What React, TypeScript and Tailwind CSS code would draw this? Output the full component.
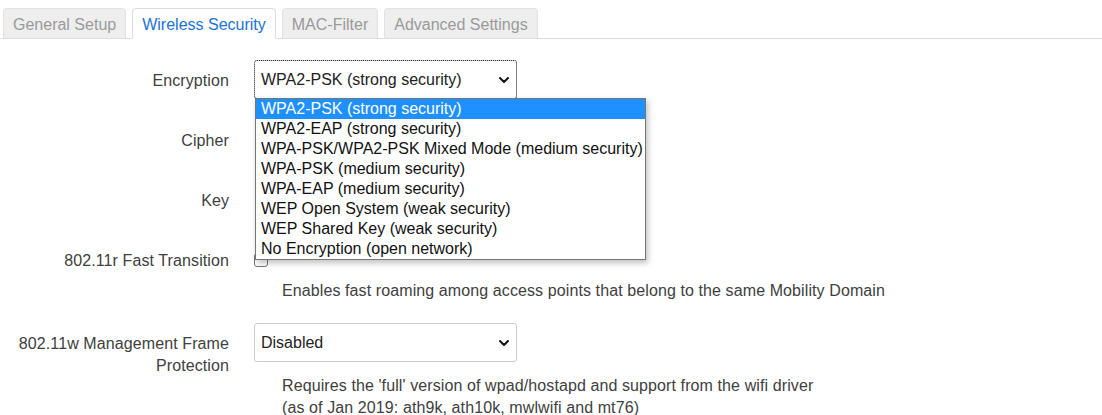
import React from "react";

const tabs = [
  { label: "General Setup", active: false },
  { label: "Wireless Security", active: true },
  { label: "MAC-Filter", active: false },
  { label: "Advanced Settings", active: false },
];

const encryptionOptions = [
  "WPA2-PSK (strong security)",
  "WPA2-EAP (strong security)",
  "WPA-PSK/WPA2-PSK Mixed Mode (medium security)",
  "WPA-PSK (medium security)",
  "WPA-EAP (medium security)",
  "WEP Open System (weak security)",
  "WEP Shared Key (weak security)",
  "No Encryption (open network)",
];

const Chevron = () => (
  <svg width="12" height="12" viewBox="0 0 12 12" className="shrink-0">
    <path d="M2 4 L6 8 L10 4" fill="none" stroke="#111" strokeWidth="2" strokeLinecap="round" strokeLinejoin="round" />
  </svg>
);

const SelectBox = ({ value, focused }: { value: string; focused?: boolean }) => (
  <div
    className={`flex items-center justify-between w-[263px] h-[39px] pl-[6px] pr-[6px] pt-px bg-white rounded-[3px] border border-[#ccc] text-[#222] ${
      focused ? "outline-1 outline-dotted outline-[#333] -outline-offset-1" : ""
    }`}
  >
    <span>{value}</span>
    <Chevron />
  </div>
);

const Label = ({ children, className = "" }: { children: React.ReactNode; className?: string }) => (
  <div className={`w-[229px] shrink-0 text-right leading-[22px] tracking-[0.1px] text-[#404040] ${className}`}>
    {children}
  </div>
);

export default function App() {
  return (
    <div className="w-[1102px] h-[415px] bg-white overflow-hidden text-[16px] font-['Liberation_Sans',Arial,sans-serif]">
      {/* tab bar */}
      <ul className="flex items-end gap-[6px] h-[39px] pl-[3px] border-b border-[#ddd]">
        {tabs.map((t) => (
          <li
            key={t.label}
            className={`h-[31px] -mb-px px-[9px] pt-[2px] flex items-center rounded-t-[4px] border ${
              t.active
                ? "bg-white border-[#ddd] border-b-white text-[#1a73d9]"
                : "bg-[#eee] border-[#e2e2e2] border-b-[#ddd] text-[#9a9a9a]"
            }`}
          >
            {t.label}
          </li>
        ))}
      </ul>

      <div className="relative pt-[21px]">
        <div className="flex flex-col gap-[21px]">
          {/* Encryption */}
          <div className="flex items-center h-[39px]">
            <Label className="pt-[2px]">Encryption</Label>
            <div className="ml-[25px]">
              <SelectBox value="WPA2-PSK (strong security)" focused />
            </div>
          </div>

          {/* Cipher */}
          <div className="flex items-center h-[39px]">
            <Label className="pt-[2px]">Cipher</Label>
          </div>

          {/* Key */}
          <div className="flex items-center h-[39px]">
            <Label className="pt-[2px]">Key</Label>
          </div>

          {/* 802.11r */}
          <div className="flex items-center h-[39px]">
            <Label className="pt-[2px]">802.11r Fast Transition</Label>
            <div className="ml-[25px] w-[14px] h-[14px] border border-[#767676] rounded-[3px]" />
          </div>
        </div>
        <div className="pl-[282px] pt-px text-[#404040] leading-[22px] tracking-[0.1px]">
          Enables fast roaming among access points that belong to the same Mobility Domain
        </div>

        {/* 802.11w */}
        <div className="flex items-start mt-[21px]">
          <Label className="pt-[10px]">
            802.11w Management Frame
            <br />
            Protection
          </Label>
          <div className="ml-[25px]">
            <SelectBox value="Disabled" />
          </div>
        </div>
        <div className="pl-[282px] -mt-[2px] text-[#404040] leading-[22px] tracking-[0.1px]">
          Requires the 'full' version of wpad/hostapd and support from the wifi driver
          <br />
          (as of Jan 2019: ath9k, ath10k, mwlwifi and mt76)
        </div>

        {/* open dropdown list */}
        <ul className="absolute left-[255px] top-[59px] w-[391px] bg-white border border-[#767676] shadow-[2px_3px_6px_rgba(0,0,0,0.25)] text-[#111]">
          {encryptionOptions.map((o, i) => (
            <li
              key={o}
              className={`h-[20px] leading-[20px] pl-[5px] whitespace-nowrap ${i === 0 ? "bg-[#1e90ff] text-white" : ""}`}
            >
              {o}
            </li>
          ))}
        </ul>
      </div>
    </div>
  );
}
